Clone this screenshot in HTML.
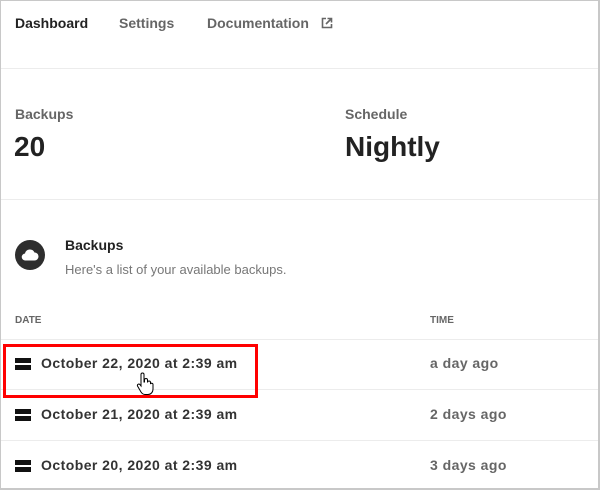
<!DOCTYPE html>
<html><head><style>
*{margin:0;padding:0;box-sizing:border-box}
body{width:600px;height:490px;background:#fff;font-family:"Liberation Sans",Arial,sans-serif;position:relative;overflow:hidden}
.frame{position:absolute;left:0;top:0;width:600px;height:490px;border:1px solid #c8c8c8;border-right:2px solid #c8c8c8;border-bottom:2px solid #c8c8c8}
.t{position:absolute;white-space:nowrap;font-weight:bold}
.r{letter-spacing:0.45px}
.hl{position:absolute;left:1px;right:2px;height:1px;background:#ececec}
.ic{position:absolute;left:15px;width:16px;height:12px}
.ic div{height:5px;background:#111;margin-bottom:2px}
</style></head><body>
<div class="frame"></div>
<div class="t" style="left:15px;top:15px;font-size:14px;color:#222">Dashboard</div>
<div class="t" style="left:119px;top:15px;font-size:14px;color:#666">Settings</div>
<div class="t" style="left:207px;top:15px;font-size:14px;color:#666">Documentation</div>
<svg style="position:absolute;left:321px;top:17px" width="12" height="12" viewBox="0 0 12 12" fill="none" stroke="#666" stroke-width="1.6"><path d="M5 1.5H1.5v9h9V7"/><path d="M6.5 1.5h4v4M10.5 1.5L5 7"/></svg>
<div class="hl" style="top:68px"></div>
<div class="t" style="left:15px;top:106px;font-size:14px;color:#666">Backups</div>
<div class="t" style="left:14px;top:131px;font-size:28px;color:#222">20</div>
<div class="t" style="left:345px;top:106px;font-size:14px;color:#666">Schedule</div>
<div class="t" style="left:345px;top:131px;font-size:28px;color:#222">Nightly</div>
<div class="hl" style="top:199px"></div>
<div style="position:absolute;left:15px;top:240px;width:30px;height:30px;border-radius:50%;background:#2e2e2e"></div>
<svg style="position:absolute;left:21px;top:248px" width="18" height="13" viewBox="0 0 18 13"><path d="M4.5 12.5a3.5 3.5 0 0 1-.5-7A5 5 0 0 1 13.5 4.5a4 4 0 0 1 0 8z" fill="#fff"/></svg>
<div class="t" style="left:65px;top:237px;font-size:14px;color:#222">Backups</div>
<div style="position:absolute;left:65px;top:262px;font-size:13px;color:#777;white-space:nowrap">Here's a list of your available backups.</div>
<div class="t" style="left:15px;top:315px;font-size:10px;color:#666">DATE</div>
<div class="t" style="left:430px;top:315px;font-size:10px;color:#666">TIME</div>
<div class="hl" style="top:339px"></div>
<div class="ic" style="top:358px"><div></div><div></div></div>
<div class="t r" style="left:41px;top:355px;font-size:14px;color:#333">October 22, 2020 at 2:39 am</div>
<div class="t r" style="left:430px;top:355px;font-size:14px;color:#666">a day ago</div>
<div class="hl" style="top:389px"></div>
<div class="ic" style="top:409px"><div></div><div></div></div>
<div class="t r" style="left:41px;top:406px;font-size:14px;color:#333">October 21, 2020 at 2:39 am</div>
<div class="t r" style="left:430px;top:406px;font-size:14px;color:#666">2 days ago</div>
<div class="hl" style="top:440px"></div>
<div class="ic" style="top:460px"><div></div><div></div></div>
<div class="t r" style="left:41px;top:457px;font-size:14px;color:#333">October 20, 2020 at 2:39 am</div>
<div class="t r" style="left:430px;top:457px;font-size:14px;color:#666">3 days ago</div>
<div style="position:absolute;left:3px;top:344px;width:255px;height:54px;border:3px solid #f00"></div>
<svg style="position:absolute;left:136px;top:372px" width="18" height="24" viewBox="0 0 18 24"><path d="M5 2.5a1.5 1.5 0 0 1 3 0V10h.5V8a1.5 1.5 0 0 1 3 0v2.5a1.5 1.5 0 0 1 3 0V12a1.3 1.3 0 0 1 2.5.5V17c0 3-2 5.5-5 5.5H9c-2 0-3-1-4-2.5L1.5 14a1.4 1.4 0 0 1 2.3-1.5L5 14z" fill="#fff" stroke="#000" stroke-width="1"/></svg>
</body></html>
